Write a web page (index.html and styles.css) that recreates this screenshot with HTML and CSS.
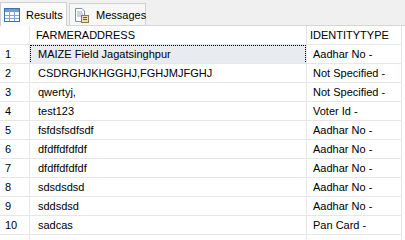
FILE: index.html
```html
<!DOCTYPE html>
<html lang="en">
<head>
    <meta charset="UTF-8">
    <title>Results</title>
    <link rel="stylesheet" href="styles.css">
</head>
<body>
    <div class="tabBar">
        <div class="tab active">
            <svg width="16" height="14" viewBox="0 0 16 14">
                <rect x="0.5" y="0.5" width="15" height="13" fill="#fff" stroke="#3d6fb5"/>
                <rect x="1" y="1" width="14" height="3" fill="#6d9ad6"/>
                <path d="M1 7.5H15M1 10.5H15M5.5 1V13M10.5 1V13" stroke="#7fa3d6" stroke-width="1"/>
            </svg>
            <span>Results</span>
        </div>
        <div class="tab msg">
            <svg width="16" height="16" viewBox="0 0 16 16">
                <path d="M1.5 1.5H8L10.5 4V14.5H1.5Z" fill="#fff" stroke="#7b8ea8"/>
                <path d="M3 5H8M3 7H9M3 9H9" stroke="#9aa8bb"/>
                <rect x="7.5" y="8.5" width="7" height="7" fill="#e8e0c0" stroke="#8a7a4a"/>
                <path d="M9 10.5H13M9 12.5H13" stroke="#6b5b30"/>
            </svg>
            <span>Messages</span>
        </div>
    </div>
    <div class="grid">
        <div class="row head">
            <div class="num"></div>
            <div class="addr">FARMERADDRESS</div>
            <div class="idt">IDENTITYTYPE</div>
        </div>
        <div class="row">
            <div class="num">1</div>
            <div class="addr"><span class="sel">MAIZE Field Jagatsinghpur</span></div>
            <div class="idt">Aadhar No -</div>
        </div>
        <div class="row">
            <div class="num">2</div>
            <div class="addr">CSDRGHJKHGGHJ,FGHJMJFGHJ</div>
            <div class="idt">Not Specified -</div>
        </div>
        <div class="row">
            <div class="num">3</div>
            <div class="addr">qwertyj,</div>
            <div class="idt">Not Specified -</div>
        </div>
        <div class="row">
            <div class="num">4</div>
            <div class="addr">test123</div>
            <div class="idt">Voter Id -</div>
        </div>
        <div class="row">
            <div class="num">5</div>
            <div class="addr">fsfdsfsdfsdf</div>
            <div class="idt">Aadhar No -</div>
        </div>
        <div class="row">
            <div class="num">6</div>
            <div class="addr">dfdffdfdfdf</div>
            <div class="idt">Aadhar No -</div>
        </div>
        <div class="row">
            <div class="num">7</div>
            <div class="addr">dfdffdfdfdf</div>
            <div class="idt">Aadhar No -</div>
        </div>
        <div class="row">
            <div class="num">8</div>
            <div class="addr">sdsdsdsd</div>
            <div class="idt">Aadhar No -</div>
        </div>
        <div class="row">
            <div class="num">9</div>
            <div class="addr">sddsdsd</div>
            <div class="idt">Aadhar No -</div>
        </div>
        <div class="row">
            <div class="num">10</div>
            <div class="addr">sadcas</div>
            <div class="idt">Pan Card -</div>
        </div>
        <div class="row last">
            <div class="num"></div>
            <div class="addr"></div>
            <div class="idt"></div>
        </div>
    </div>
</body>
</html>
```
FILE: styles.css
```css
*{
    margin: 0;
    padding: 0;
    box-sizing: border-box;
}
body{
    width: 405px;
    height: 240px;
    overflow: hidden;
    background: #fff;
    font-family: "Liberation Sans", Arial, sans-serif;
    font-size: 11px;
    color: #000;
}
.tabBar{
    height: 26px;
    background: #f0f0f0;
    border-bottom: 1px solid #d5d5d5;
    display: flex;
    align-items: flex-end;
}
.tab{
    height: 22px;
    display: flex;
    align-items: center;
    gap: 6px;
    padding: 0 0 0 4px;
    border: 1px solid #d0d0d0;
    border-bottom: none;
    background: #f7f7f7;
    font-size: 11px;
    margin-left: 2px;
    flex: none;
}
.tab.active{
    background: #fbfbfb;
    height: 24px;
    margin-left: 0;
    margin-bottom: -1px;
    width: 67px;
    padding-left: 3px;
}
.tab.msg{
    width: 77px;
}
.tab svg{
    display: block;
    flex: none;
}
.grid{
    width: 402px;
}
.row{
    display: flex;
    height: 19px;
    border-bottom: 1px solid #e6e6e6;
}
.row.last{
    height: 10px;
    border-bottom: none;
}
.row > div{
    border-right: 1px solid #e6e6e6;
    line-height: 18px;
    white-space: nowrap;
    overflow: hidden;
}
.num{
    width: 30px;
    padding-left: 5px;
}
.addr{
    width: 277px;
    padding-left: 8px;
}
.idt{
    width: 95px;
    padding-left: 6px;
}
.head > div{
    line-height: 19px;
}
.head .addr{
    padding-left: 6px;
}
.head .idt{
    padding-left: 3px;
}
.sel{
    display: block;
    margin-left: -8px;
    height: 19px;
    padding-left: 7px;
    background: #e8ebf0;
    border: 1px dotted #000;
    line-height: 17px;
}
```
